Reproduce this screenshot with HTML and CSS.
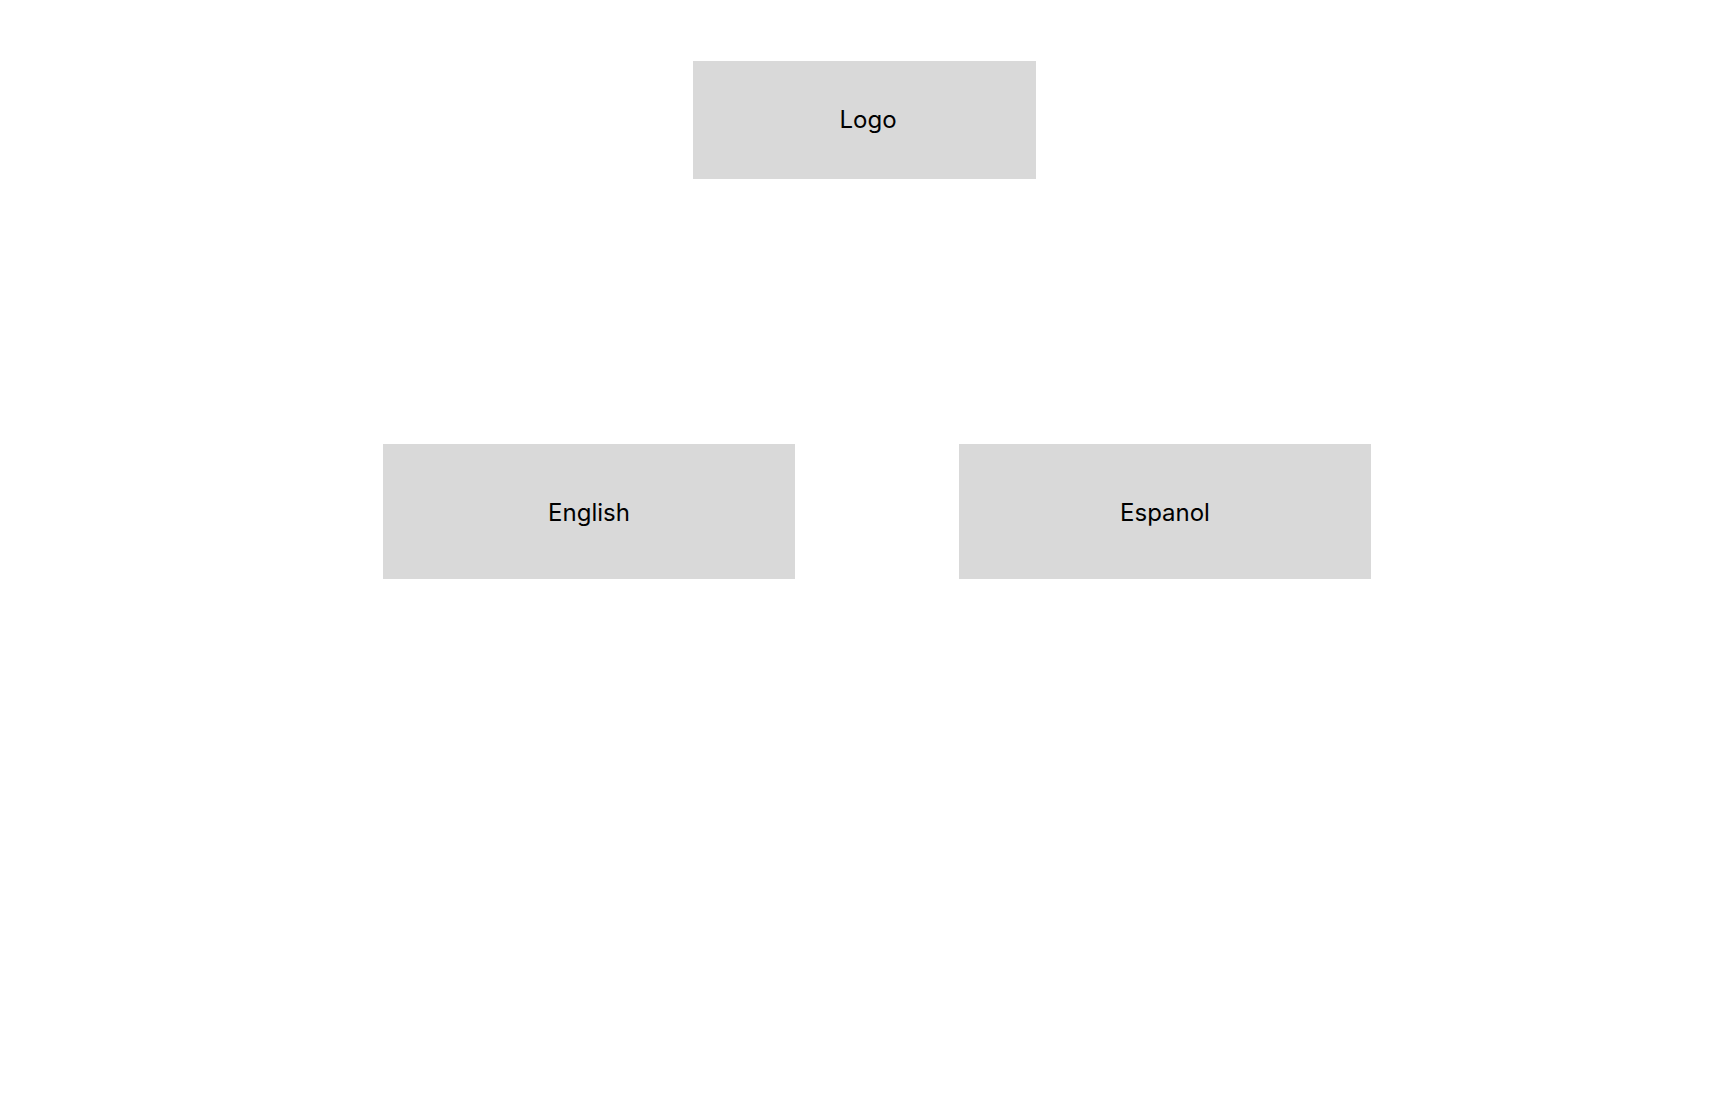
FILE: index.html
```html
<!DOCTYPE html>
<html lang="en">
<head>
  <meta charset="utf-8">
  <meta name="viewport" content="width=device-width, initial-scale=1">
  <title>Choose a language</title>
  <link rel="stylesheet" href="styles.css">
</head>
<body>
  <header class="header">
    <div class="logo">Logo</div>
  </header>
  <main class="languages">
    <button class="language" type="button" lang="en">English</button>
    <button class="language" type="button" lang="es">Espanol</button>
  </main>
</body>
</html>
```
FILE: styles.css
```css
* {
  box-sizing: border-box;
}

body {
  margin: 0;
  background: #fff;
  color: #000;
  font-family: Inter, "Liberation Sans", sans-serif;
  font-size: 24px;
  font-weight: 400;
  line-height: 30px;
}

.header {
  display: flex;
  justify-content: center;
  padding-top: 61px;
}

.logo {
  display: flex;
  align-items: center;
  justify-content: center;
  width: 343px;
  min-height: 118px;
  padding-left: 8px;
  background: #d9d9d9;
}

.languages {
  display: flex;
  flex-wrap: wrap;
  justify-content: center;
  gap: 40px 164px;
  padding: 265px 0 40px 26px;
}

.language {
  width: 412px;
  min-height: 135px;
  padding: 2px 0 0;
  border: 0;
  background: #d9d9d9;
  color: inherit;
  font: inherit;
  cursor: pointer;
}
```
